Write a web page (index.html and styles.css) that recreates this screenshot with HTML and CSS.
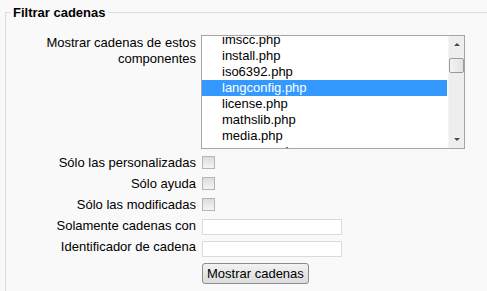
FILE: index.html
```html
<!DOCTYPE html>
<html>
<head>
<meta charset="utf-8">
<link rel="stylesheet" href="styles.css">
</head>
<body>
<fieldset class="box">
  <legend class="legend">Filtrar cadenas</legend>
  <div class="row row-select">
    <div class="label label-top">Mostrar cadenas de estos componentes</div>
    <div class="control">
      <div class="listbox">
        <div class="list">
          <div class="opt">imscc.php</div>
          <div class="opt">install.php</div>
          <div class="opt">iso6392.php</div>
          <div class="opt selected">langconfig.php</div>
          <div class="opt">license.php</div>
          <div class="opt">mathslib.php</div>
          <div class="opt">media.php</div>
          <div class="opt">message.php</div>
        </div>
        <div class="scrollbar">
          <div class="arrow arrow-up"></div>
          <div class="track"><div class="thumb"></div></div>
          <div class="arrow arrow-down"></div>
        </div>
      </div>
    </div>
  </div>
  <div class="row row-first">
    <div class="label">Sólo las personalizadas</div>
    <div class="control"><span class="checkbox"></span></div>
  </div>
  <div class="row">
    <div class="label">Sólo ayuda</div>
    <div class="control"><span class="checkbox"></span></div>
  </div>
  <div class="row">
    <div class="label">Sólo las modificadas</div>
    <div class="control"><span class="checkbox"></span></div>
  </div>
  <div class="row">
    <div class="label">Solamente cadenas con</div>
    <div class="control"><span class="textinput"></span></div>
  </div>
  <div class="row">
    <div class="label">Identificador de cadena</div>
    <div class="control"><span class="textinput textinput-2"></span></div>
  </div>
  <div class="row row-button">
    <div class="label"></div>
    <div class="control"><span class="button">Mostrar cadenas</span></div>
  </div>
</fieldset>
</body>
</html>
```

FILE: styles.css
```css
html, body {
  margin: 0;
  padding: 0;
  background: #f9f9f9;
  overflow: hidden;
}
body {
  padding-top: 5px;
  font-family: "Liberation Sans", Arial, sans-serif;
  font-size: 13px;
  color: #000;
  width: 487px;
  height: 291px;
  box-sizing: border-box;
}
.box {
  margin: 0 -20px 0 5px;
  padding: 0 0 20px 5px;
  border: 1px solid #dcdcdc;
  min-width: 0;
}
.legend {
  padding: 0 2px;
  font-weight: bold;
  font-size: 13px;
  line-height: 15px;
}
.row {
  display: grid;
  grid-template-columns: 185px 1fr;
  column-gap: 5px;
  height: 21px;
  align-items: start;
}
.row-select {
  height: 114px;
  margin-top: 15px;
}
.row-first {
  margin-top: 3px;
}
.row-button {
  margin-top: 6px;
}
.label {
  text-align: right;
  line-height: 21px;
  white-space: nowrap;
}
.label-top {
  white-space: normal;
  line-height: 16px;
  padding-top: 0;
  padding-left: 30px;
}
.control {
  display: flex;
  align-items: flex-start;
}
.listbox {
  display: flex;
  width: 264px;
  height: 114px;
  box-sizing: border-box;
  border: 1px solid #a5a5a5;
  background: #fff;
}
.list {
  width: 246px;
  height: 112px;
  overflow: hidden;
}
.opt {
  height: 16px;
  line-height: 16px;
  padding-left: 20px;
  white-space: nowrap;
  position: relative;
  top: -4px;
}
.selected {
  background: #3399ff;
  color: #fff;
}
.scrollbar {
  width: 15px;
  margin-left: 1px;
  height: 112px;
  display: flex;
  flex-direction: column;
  background: #eeeeee;
  border-left: 1px solid #f4f4f4;
}
.arrow {
  height: 17px;
  display: flex;
  justify-content: center;
  align-items: center;
}
.arrow-up::before, .arrow-down::before {
  content: "";
  width: 0;
  height: 0;
  border-left: 3px solid transparent;
  border-right: 3px solid transparent;
}
.arrow-up::before {
  border-bottom: 3px solid #4a4a4a;
}
.arrow-down::before {
  border-top: 3px solid #4a4a4a;
}
.track {
  flex: 1;
}
.thumb {
  margin-top: 5px;
  height: 15px;
  box-sizing: border-box;
  border: 1px solid #9a9a9a;
  border-radius: 2px;
  background: linear-gradient(to right, #f4f4f4, #e2e2e2);
}
.checkbox {
  display: block;
  width: 13px;
  height: 13px;
  box-sizing: border-box;
  margin: 4px 0 0 1px;
  border: 1px solid #b5b5b5;
  background: linear-gradient(to bottom, #dcdcdc, #f4f4f4);
}
.textinput {
  display: block;
  width: 140px;
  height: 16px;
  box-sizing: border-box;
  margin: 4px 0 0 1px;
  border: 1px solid #dadada;
  background: #fff;
}
.textinput-2 {
  margin-top: 5px;
}
.button {
  display: block;
  margin-left: 1px;
  height: 21px;
  box-sizing: border-box;
  padding: 0 4px;
  line-height: 19px;
  font-size: 13px;
  border: 1px solid #8c8c8c;
  border-radius: 3px;
  background: linear-gradient(to bottom, #f2f2f2, #dcdcdc);
  color: #000;
}
```
